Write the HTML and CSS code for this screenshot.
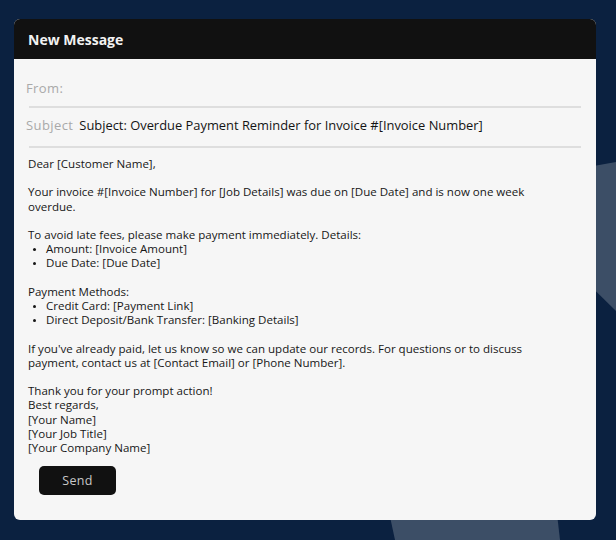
FILE: index.html
```html
<!DOCTYPE html>
<html>
<head>
<meta charset="utf-8">
<link rel="stylesheet" href="styles.css">
</head>
<body>
<svg class="bg" width="616" height="540" viewBox="0 0 616 540">
  <polygon points="560,172 616,162 616,311 560,256" fill="#3c4e66"/>
  <polygon points="380,470 552,470 560,540 395,540" fill="#3c4e66"/>
</svg>
<div class="wrap">
  <div class="card">
    <div class="header">New Message</div>
    <div class="field from"><span class="label">From:</span></div>
    <div class="rule"></div>
    <div class="field subject"><span class="label">Subject</span><span class="value">Subject: Overdue Payment Reminder for Invoice #[Invoice Number]</span></div>
    <div class="rule"></div>
    <div class="body">
      <p>Dear [Customer Name],</p>
      <p>Your invoice #[Invoice Number] for [Job Details] was due on [Due Date] and is now one week<br>overdue.</p>
      <div class="block">
        <p>To avoid late fees, please make payment immediately. Details:</p>
        <ul>
          <li>Amount: [Invoice Amount]</li>
          <li>Due Date: [Due Date]</li>
        </ul>
      </div>
      <div class="block">
        <p>Payment Methods:</p>
        <ul>
          <li>Credit Card: [Payment Link]</li>
          <li>Direct Deposit/Bank Transfer: [Banking Details]</li>
        </ul>
      </div>
      <p>If you've already paid, let us know so we can update our records. For questions or to discuss<br>payment, contact us at [Contact Email] or [Phone Number].</p>
      <p>Thank you for your prompt action!<br>Best regards,<br>[Your Name]<br>[Your Job Title]<br>[Your Company Name]</p>
    </div>
    <div class="actions"><button class="send">Send</button></div>
  </div>
</div>
</body>
</html>
```
FILE: styles.css
```css
html, body {
  margin: 0;
  padding: 0;
}
body {
  width: 616px;
  height: 540px;
  background: #0b2140;
  overflow: hidden;
  position: relative;
  font-family: "Open Sans", "DejaVu Sans", sans-serif;
}
.bg {
  position: absolute;
  left: 0;
  top: 0;
  z-index: 0;
}
.wrap {
  position: relative;
  z-index: 1;
  padding: 19px 20px 0 14px;
}
.card {
  background: #f6f6f6;
  border-radius: 6px;
  overflow: hidden;
  height: 501px;
  display: flex;
  flex-direction: column;
}
.header {
  background: #111111;
  height: 40px;
  flex: none;
  display: flex;
  align-items: center;
  padding-left: 14px;
  color: #f2f2f2;
  font-weight: 700;
  font-size: 14px;
}
.field {
  display: flex;
  align-items: center;
  padding-left: 12px;
  line-height: 16px;
}
.field.from {
  padding-top: 21px;
  padding-bottom: 10px;
}
.field.subject {
  padding-top: 9px;
  padding-bottom: 13px;
}
.label {
  color: #a9a9a9;
  font-size: 13px;
  letter-spacing: 0.4px;
}
.value {
  color: #141414;
  font-size: 12.9px;
  margin-left: 6px;
}
.rule {
  height: 2px;
  background: #dedede;
  margin: 0 15px 0 15px;
}
.body {
  padding: 9px 14px 0 14px;
  font-size: 11.55px;
  line-height: 14.2px;
  color: #161616;
}
.body p {
  margin: 0 0 14.2px 0;
}
.body p:last-child {
  margin-bottom: 0;
}
.block {
  margin-bottom: 14.2px;
}
.block p {
  margin: 0;
}
.body ul {
  margin: 0;
  padding-left: 18px;
}
.body li::marker {
  font-size: 8px;
}
.actions {
  padding: 11px 0 0 25px;
}
.send {
  width: 77px;
  height: 29px;
  background: #111111;
  border: none;
  border-radius: 5px;
  color: #c8c8c8;
  font-family: inherit;
  font-size: 12.5px;
  letter-spacing: 0.3px;
}
```
